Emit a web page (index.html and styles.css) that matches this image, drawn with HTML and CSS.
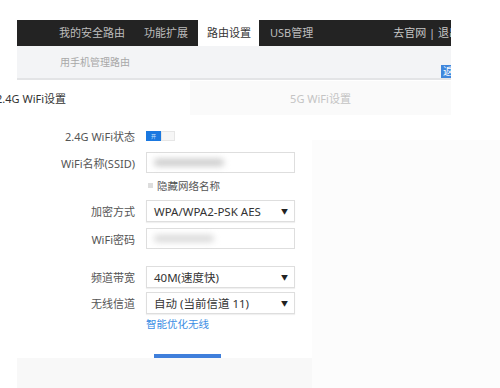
FILE: index.html
```html
<!DOCTYPE html>
<html>
<head>
    <title>路由设置</title>
    <meta charset="UTF-8">
    <meta name="viewport" content="width=device-width, initial-scale=1.0">
    <link rel="stylesheet" href="styles.css">
</head>
<body>
    <div class="page">
        <div class="frame">
            <div class="nav">
                <span class="nav-item first">我的安全路由</span>
                <span class="nav-item">功能扩展</span>
                <span class="nav-item active">路由设置</span>
                <span class="nav-item usb">USB管理</span>
                <span class="nav-right">去官网 | 退出</span>
            </div>
            <div class="subbar">
                <span class="sub-link">用手机管理路由</span>
                <span class="back-btn">返回</span>
            </div>
        </div>

        <div class="tabs">
            <div class="tab current"><span>2.4G WiFi设置</span></div>
            <div class="tab">5G WiFi设置</div>
        </div>

        <div class="main">
            <div class="form-col">
                <div class="form">
                    <div class="row status-row">
                        <label>2.4G WiFi状态</label>
                        <div class="toggle"><span class="on">开</span><span class="off"></span></div>
                    </div>
                    <div class="row">
                        <label>WiFi名称(SSID)</label>
                        <div class="field"><span class="smudge"></span></div>
                    </div>
                    <div class="row check-row">
                        <label></label>
                        <div class="check"><span class="box"></span>隐藏网络名称</div>
                    </div>
                    <div class="row">
                        <label>加密方式</label>
                        <div class="field select">WPA/WPA2-PSK AES<span class="arrow">▼</span></div>
                    </div>
                    <div class="row">
                        <label>WiFi密码</label>
                        <div class="field"><span class="smudge short"></span></div>
                    </div>
                    <div class="row band-row">
                        <label>频道带宽</label>
                        <div class="field select">40M(速度快)<span class="arrow">▼</span></div>
                    </div>
                    <div class="row channel-row">
                        <label>无线信道</label>
                        <div class="field select">自动 (当前信道 11)<span class="arrow">▼</span></div>
                    </div>
                    <div class="row link-row">
                        <label></label>
                        <a class="link">智能优化无线</a>
                    </div>
                    <div class="save-wrap"><span class="save-btn"></span></div>
                </div>
                <div class="footer"></div>
            </div>
            <div class="side"></div>
        </div>
    </div>
</body>
</html>
```

FILE: styles.css
```css
* {
    margin: 0;
    padding: 0;
    box-sizing: border-box;
}

body {
    font-family: "Noto Sans", "Noto Sans CJK SC", sans-serif;
    background: #fff;
    width: 500px;
    height: 388px;
    overflow: hidden;
    font-size: 11px;
    color: #444;
}

.page {
    width: 500px;
    height: 388px;
    overflow: hidden;
    padding-top: 20px;
}

.frame {
    margin-left: 17px;
    width: 434px;
    overflow: hidden;
}

/* top navigation */
.nav {
    height: 26px;
    background: #232323;
    display: flex;
    align-items: stretch;
    white-space: nowrap;
}

.nav-item {
    color: #bdbdbd;
    line-height: 26px;
    margin-left: 19px;
}

.nav-item.first {
    margin-left: 42px;
}

.nav-item.active {
    background: #fff;
    color: #333;
    margin-left: 10px;
    padding: 0 8px 0 9px;
}

.nav-item.usb {
    margin-left: 11px;
}

.nav-right {
    margin-left: auto;
    margin-right: -9px;
    color: #c8c8c8;
    line-height: 26px;
}

.subbar {
    height: 34px;
    background: #f3f4f6;
    border-bottom: 2px solid #e3e4e6;
    display: flex;
    align-items: center;
    padding-left: 43px;
}

.sub-link {
    color: #a8a8a8;
    font-size: 10px;
    margin-top: -2px;
}

.back-btn {
    margin-left: auto;
    margin-right: -14px;
    margin-top: 18px;
    background: #3f86dc;
    color: #fff;
    font-size: 10px;
    line-height: 13px;
    padding: 0 2px;
}

/* wifi tabs */
.tabs {
    display: flex;
    width: 451px;
    height: 34px;
    margin-top: 1px;
}

.tab {
    flex: 1;
    display: flex;
    align-items: center;
    justify-content: center;
    color: #c4c4c4;
    background: #fafafa;
}

.tab.current {
    flex: 0 0 190px;
    justify-content: flex-start;
    background: #fff;
    color: #333;
}

.tab.current span {
    margin-left: -4px;
}

/* form */
.main {
    display: flex;
}

.form-col {
    width: 312px;
}

.side {
    flex: 1;
    background: #fcfcfc;
    margin-top: 25px;
    height: 260px;
}

.form {
    padding-top: 11px;
}

.row {
    display: flex;
    align-items: center;
    margin-top: 6px;
}

.row label {
    width: 135px;
    text-align: right;
    color: #555;
    margin-right: 11px;
    flex-shrink: 0;
}

.status-row {
    margin-top: 0;
    height: 20px;
}

.toggle {
    display: flex;
    height: 10px;
    width: 29px;
}

.toggle .on {
    width: 15px;
    background: #1a78e0;
    color: #cfe3fb;
    font-size: 5px;
    line-height: 10px;
    text-align: center;
}

.toggle .off {
    flex: 1;
    background: #f6f6f6;
    border: 1px solid #e6e6e6;
}

.field {
    width: 149px;
    height: 21px;
    border: 1px solid #dedede;
    background: #fff;
    display: flex;
    align-items: center;
    padding-left: 7px;
}

.smudge {
    width: 70px;
    height: 7px;
    background: #c9c9c9;
    border-radius: 4px;
    filter: blur(3px);
}

.smudge.short {
    width: 60px;
    background: #d8d8d8;
}

.select {
    height: 22px;
    font-size: 11.5px;
    color: #333;
    box-shadow: 0 1px 1px rgba(0, 0, 0, 0.06);
}

.arrow {
    margin-left: auto;
    margin-right: 6px;
    font-size: 7px;
    color: #222;
}

.check-row {
    margin-top: 3px;
    height: 18px;
}

.check {
    display: flex;
    align-items: center;
    color: #555;
    font-size: 10.5px;
}

.box {
    width: 5px;
    height: 5px;
    background: #ddd;
    margin: 0 4px 0 2px;
}

.band-row {
    margin-top: 17px;
}

.channel-row {
    margin-top: 4px;
}

.link-row {
    margin-top: 2px;
}

.link {
    color: #3c8ee4;
    font-size: 10.5px;
}

.save-wrap {
    padding: 23px 0 0 154px;
    height: 27px;
}

.save-btn {
    display: block;
    width: 67px;
    height: 4px;
    background: #3f7fdb;
}

.footer {
    margin-left: 17px;
    height: 40px;
    background: #f8f8f8;
}
```
